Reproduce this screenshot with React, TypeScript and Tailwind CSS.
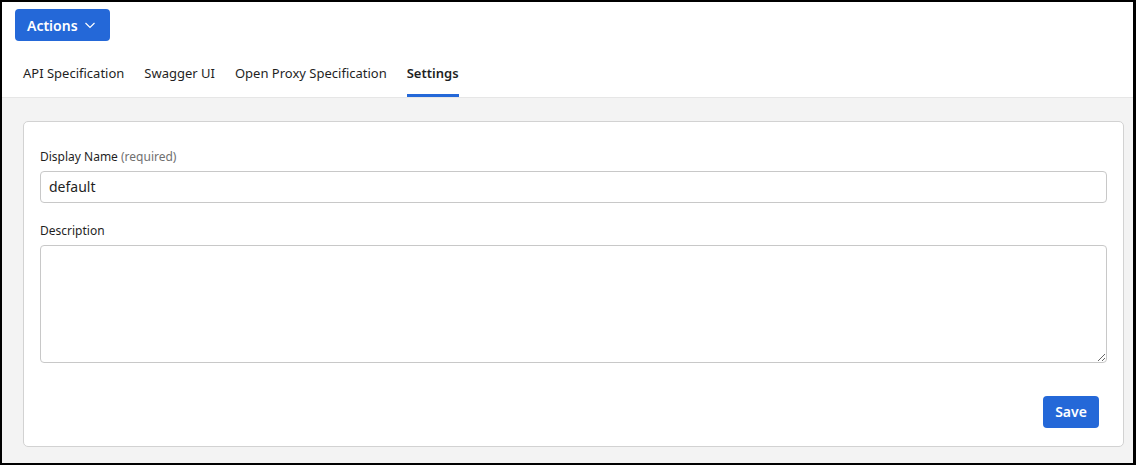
import React from "react";

export default function App() {
  const font = { fontFamily: '"Noto Sans", "Open Sans", sans-serif' };
  return (
    <div
      className="w-[1136px] h-[465px] bg-black pt-[2px] pl-[2px] pr-[3px] pb-[2px]"
      style={font}
    >
      <div className="flex h-full flex-col bg-white">
        <div className="flex flex-col">
          <div className="pl-[13px] pt-[7px]">
            <button className="flex h-[32px] w-[95px] items-center gap-[6px] rounded-[4px] bg-[#2468d8] pl-[12px] text-[14px] font-semibold text-white">
              Actions
              <svg width="12" height="12" viewBox="0 0 12 12" fill="none">
                <path d="M1.5 4l4.5 4.5L10.5 4" stroke="white" strokeWidth="1.2" />
              </svg>
            </button>
          </div>
          <div className="mt-[19px] flex gap-[20px] border-b border-[#e6e6e6] pl-[21px] text-[13px] text-[#1f1f1f]">
            {["API Specification", "Swagger UI", "Open Proxy Specification", "Settings"].map((t) => {
              const active = t === "Settings";
              return (
                <div
                  key={t}
                  className={
                    active
                      ? "border-b-[3px] border-[#2468d8] pb-[10px] pt-[4px] font-semibold"
                      : "border-b-[3px] border-transparent pb-[10px] pt-[4px]"
                  }
                >
                  {t}
                </div>
              );
            })}
          </div>
        </div>
        <div className="flex-1 bg-[#f3f3f3] pl-[21px] pr-[9px] pt-[23px] pb-[16px]">
          <div className="flex h-full flex-col rounded-[5px] border border-[#d2d2d2] bg-white px-[16px] pt-[27px]">
            <label className="mb-[6px] text-[12px] leading-[16px] text-[#1f1f1f]">
              Display Name <span className="text-[#707070]">(required)</span>
            </label>
            <input
              className="h-[32px] rounded-[4px] border border-[#c8c8c8] px-[8px] text-[14px] text-[#1f1f1f] outline-none"
              defaultValue="default"
              style={font}
            />
            <label className="mt-[20px] mb-[6px] text-[12px] leading-[16px] text-[#1f1f1f]">
              Description
            </label>
            <textarea
              className="h-[118px] resize-y rounded-[4px] border border-[#c8c8c8] px-[8px] py-[6px] text-[14px] outline-none"
              style={font}
            />
            <div className="mt-[33px] flex justify-end pr-[8px]">
              <button className="h-[32px] w-[56px] rounded-[4px] bg-[#2468d8] text-[14px] font-semibold text-white">
                Save
              </button>
            </div>
          </div>
        </div>
      </div>
    </div>
  );
}
